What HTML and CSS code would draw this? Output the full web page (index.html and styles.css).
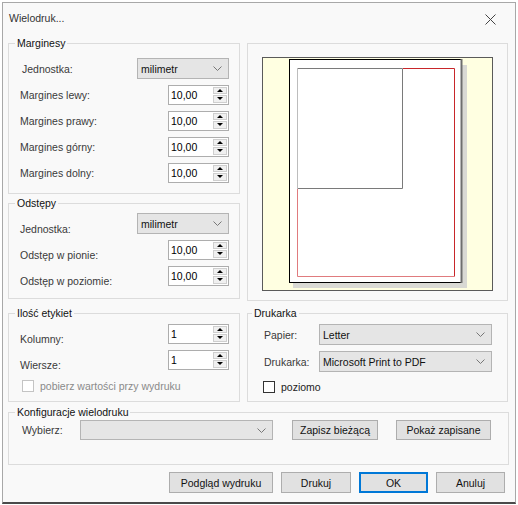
FILE: index.html
```html
<!DOCTYPE html>
<html lang="pl">
<head>
  <meta charset="UTF-8" />
  <title>Wielodruk...</title>
  <link rel="stylesheet" href="styles.css">
</head>
<body>
  <div class="window">
    <div class="titlebar">
      <span class="title">Wielodruk...</span>
      <svg class="close" width="11" height="11" viewBox="0 0 11 11">
        <path d="M0.5 0.5 L10.5 10.5 M10.5 0.5 L0.5 10.5" stroke="#444" stroke-width="1" fill="none"/>
      </svg>
    </div>

    <div class="content">
      <div class="top">
        <div class="left">
          <fieldset class="group marginesy">
            <legend>Marginesy</legend>
            <div class="rows">
              <div class="row">
                <span class="label indent">Jednostka:</span>
                <div class="combo unit"><span>milimetr</span><svg class="chev" width="9" height="5" viewBox="0 0 9 5"><polyline points="0.5,0.5 4.5,4.5 8.5,0.5" fill="none" stroke="#777"/></svg></div>
              </div>
              <div class="row">
                <span class="label">Margines lewy:</span>
                <div class="spin"><span class="spin-val">10,00</span><span class="spin-btns"><i class="up"></i><i class="down"></i></span></div>
              </div>
              <div class="row">
                <span class="label">Margines prawy:</span>
                <div class="spin"><span class="spin-val">10,00</span><span class="spin-btns"><i class="up"></i><i class="down"></i></span></div>
              </div>
              <div class="row">
                <span class="label">Margines górny:</span>
                <div class="spin"><span class="spin-val">10,00</span><span class="spin-btns"><i class="up"></i><i class="down"></i></span></div>
              </div>
              <div class="row">
                <span class="label">Margines dolny:</span>
                <div class="spin"><span class="spin-val">10,00</span><span class="spin-btns"><i class="up"></i><i class="down"></i></span></div>
              </div>
            </div>
          </fieldset>

          <fieldset class="group odstepy">
            <legend>Odstępy</legend>
            <div class="rows tight">
              <div class="row">
                <span class="label low">Jednostka:</span>
                <div class="combo unit"><span>milimetr</span><svg class="chev" width="9" height="5" viewBox="0 0 9 5"><polyline points="0.5,0.5 4.5,4.5 8.5,0.5" fill="none" stroke="#777"/></svg></div>
              </div>
              <div class="row">
                <span class="label low">Odstęp w pionie:</span>
                <div class="spin"><span class="spin-val">10,00</span><span class="spin-btns"><i class="up"></i><i class="down"></i></span></div>
              </div>
              <div class="row">
                <span class="label low">Odstęp w poziomie:</span>
                <div class="spin"><span class="spin-val">10,00</span><span class="spin-btns"><i class="up"></i><i class="down"></i></span></div>
              </div>
            </div>
          </fieldset>
        </div>

        <div class="preview">
          <svg width="231" height="234" viewBox="0 0 231 234">
            <rect x="0.5" y="0.5" width="230" height="233" fill="#ffffe1" stroke="#5a5a5a"/>
            <rect x="31" y="8" width="174" height="223" fill="#d9d9d4"/>
            <rect x="27.5" y="2.5" width="172" height="223" fill="#fff" stroke="#000"/>
            <line x1="199.5" y1="2" x2="199.5" y2="226" stroke="#6e6e6e" stroke-width="2"/>
            <path d="M35.5 11.5 H192.5 V219.5" fill="none" stroke="#c8262a"/>
            <path d="M35.5 11.5 V219.5 H192.5" fill="none" stroke="#e07b7e"/>
            <rect x="35" y="11" width="106" height="121" fill="#fff"/>
            <path d="M35.5 11.5 H140.5 V131.5 H35.5" fill="none" stroke="#7a7a7a"/>
            <line x1="35.5" y1="11.5" x2="35.5" y2="131.5" stroke="#bdbdbd"/>
          </svg>
        </div>
      </div>

      <div class="middle">
        <fieldset class="group etykiety">
          <legend>Ilość etykiet</legend>
          <div class="rows tight">
            <div class="row">
              <span class="label low">Kolumny:</span>
              <div class="spin"><span class="spin-val">1</span><span class="spin-btns"><i class="up"></i><i class="down"></i></span></div>
            </div>
            <div class="row">
              <span class="label low">Wiersze:</span>
              <div class="spin"><span class="spin-val">1</span><span class="spin-btns"><i class="up"></i><i class="down"></i></span></div>
            </div>
            <label class="check disabled"><span class="box"></span>pobierz wartości przy wydruku</label>
          </div>
        </fieldset>

        <fieldset class="group drukarka">
          <legend>Drukarka</legend>
          <div class="rows">
            <div class="row">
              <span class="label">Papier:</span>
              <div class="combo wide"><span>Letter</span><svg class="chev" width="9" height="5" viewBox="0 0 9 5"><polyline points="0.5,0.5 4.5,4.5 8.5,0.5" fill="none" stroke="#777"/></svg></div>
            </div>
            <div class="row">
              <span class="label">Drukarka:</span>
              <div class="combo wide"><span>Microsoft Print to PDF</span><svg class="chev" width="9" height="5" viewBox="0 0 9 5"><polyline points="0.5,0.5 4.5,4.5 8.5,0.5" fill="none" stroke="#777"/></svg></div>
            </div>
            <label class="check"><span class="box"></span>poziomo</label>
          </div>
        </fieldset>
      </div>

      <fieldset class="group konfig">
        <legend>Konfiguracje wielodruku</legend>
        <div class="konfig-row">
          <span class="label">Wybierz:</span>
          <div class="combo empty"><span></span><svg class="chev" width="9" height="5" viewBox="0 0 9 5"><polyline points="0.5,0.5 4.5,4.5 8.5,0.5" fill="none" stroke="#777"/></svg></div>
          <button class="btn save">Zapisz bieżącą</button>
          <button class="btn show">Pokaż zapisane</button>
        </div>
      </fieldset>

      <div class="actions">
        <button class="btn preview-btn">Podgląd wydruku</button>
        <button class="btn print">Drukuj</button>
        <button class="btn ok">OK</button>
        <button class="btn cancel">Anuluj</button>
      </div>
    </div>
  </div>
</body>
</html>
```

FILE: styles.css
```css
body {
  margin: 0;
  background: #fff;
  font-family: "Liberation Sans", Arial, sans-serif;
  font-size: 10.5px;
  color: #111;
}
.window {
  box-sizing: border-box;
  width: 514px;
  height: 502px;
  margin: 2px 0 0 2px;
  border: 1px solid #a8a8a8;
  border-bottom: 2px solid #4a4a4a;
  background: #f9f9f9;
}
.titlebar {
  height: 33px;
  display: flex;
  justify-content: space-between;
  align-items: flex-start;
  padding: 9px 19px 0 6px;
  box-sizing: border-box;
}
.title {
  color: #333;
}
.close {
  margin-top: 2px;
}
.content {
  padding: 0 6px 0 5px;
}
.top {
  display: grid;
  grid-template-columns: 232px 261px;
  column-gap: 7px;
}
.left {
  display: flex;
  flex-direction: column;
  gap: 2px;
}

/* group boxes */
.group {
  margin: 0;
  padding: 0 10px 0 11px;
  border: 1px solid #dcdcdc;
  min-width: 0;
  box-sizing: border-box;
}
.group legend {
  padding: 0 2px;
  margin-left: -5px;
  line-height: 14px;
  color: #111;
}
.marginesy {
  height: 158px;
}
.odstepy {
  height: 103px;
}
.rows {
  display: flex;
  flex-direction: column;
  gap: 5px;
  padding-top: 8px;
}
.rows.tight {
  padding-top: 3px;
}
.row {
  display: flex;
  justify-content: space-between;
  align-items: center;
  height: 21px;
}
.label {
  color: #3a3a3a;
}
.label.indent {
  padding-left: 2px;
}
.label.low {
  padding-top: 10px;
}

/* combo box */
.combo {
  box-sizing: border-box;
  height: 21px;
  border: 1px solid #b4b4b4;
  background: #e5e5e5;
  display: flex;
  align-items: center;
  justify-content: space-between;
  padding: 0 6px 0 3px;
  color: #111;
}
.combo.unit {
  width: 92px;
}
.combo.wide {
  width: 173px;
}
.combo.empty {
  width: 193px;
  height: 20px;
}

/* spinner */
.spin {
  box-sizing: border-box;
  width: 61px;
  height: 20px;
  border: 1px solid #adadad;
  background: #fff;
  display: flex;
}
.spin-val {
  flex: 1;
  padding-left: 2px;
  line-height: 18px;
  color: #000;
}
.spin-btns {
  width: 14px;
  margin: 1px 1px 1px 0;
  display: flex;
  flex-direction: column;
  gap: 1px;
}
.spin-btns i {
  flex: 1;
  background: #f0f0f0;
  border: 1px solid #cfcfcf;
  display: flex;
  align-items: center;
  justify-content: center;
}
.spin-btns i::before {
  content: "";
  border-left: 3px solid transparent;
  border-right: 3px solid transparent;
}
.spin-btns .up::before {
  border-bottom: 3px solid #000;
}
.spin-btns .down::before {
  border-top: 3px solid #000;
}

/* preview */
.preview {
  margin-top: 7px;
  height: 258px;
  box-sizing: border-box;
  border: 1px solid #dcdcdc;
  padding: 13px 0 0 14px;
}
.preview svg {
  display: block;
}

/* second row */
.middle {
  display: grid;
  grid-template-columns: 232px 261px;
  column-gap: 7px;
  margin-top: 5px;
}
.etykiety,
.drukarka {
  height: 96px;
}
.drukarka {
  padding: 0 15px 0 16px;
}
.drukarka .rows {
  padding-top: 4px;
  gap: 6px;
}
.drukarka legend {
  margin-left: -12px;
}
.check {
  display: flex;
  align-items: center;
  gap: 6px;
  height: 14px;
}
.check .box {
  box-sizing: border-box;
  width: 12px;
  height: 12px;
  border: 1px solid #333;
  background: #fff;
}
.check.disabled {
  color: #8a8a8a;
  margin: 4px 0 0 2px;
}
.check.disabled .box {
  border-color: #c4c4c4;
}
.drukarka .check {
  margin-top: 2px;
  margin-left: -1px;
  color: #222;
}

/* config */
.konfig {
  margin-top: 3px;
  height: 60px;
}
.konfig-row {
  display: flex;
  align-items: center;
  padding-top: 1px;
}
.konfig-row .label {
  padding-left: 2px;
  width: 58px;
}
.konfig-row .save {
  margin-left: 19px;
  width: 86px;
}
.konfig-row .show {
  margin-left: 18px;
  width: 95px;
}

/* buttons */
.btn {
  box-sizing: border-box;
  height: 20px;
  border: 1px solid #adadad;
  background: #e1e1e1;
  font-family: inherit;
  font-size: inherit;
  color: #111;
  padding: 0;
}
.actions {
  display: flex;
  justify-content: flex-end;
  gap: 8px;
  margin-top: 7px;
  padding-right: 4px;
}
.actions .btn {
  height: 21px;
  width: 70px;
}
.actions .preview-btn {
  width: 104px;
}
.actions .ok {
  border: 1px solid #0078d7;
  box-shadow: inset 0 0 0 1px #0078d7;
  width: 69px;
}
.actions .cancel {
  width: 69px;
}
```
